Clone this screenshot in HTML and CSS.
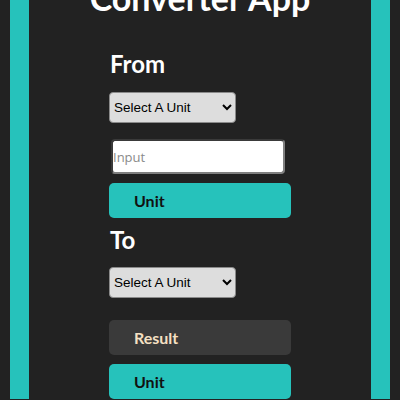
FILE: index.html
```html
<!DOCTYPE html>
<html>
<head>
<meta charset="utf-8">
<link rel="stylesheet" href="styles.css">
</head>
<body>
<div class="frame">
  <h1 class="title">Converter App</h1>
  <div class="panel">
    <h2 class="label label-from">From</h2>
    <select class="unit-select select-from"><option>Select A Unit</option></select>
    <input class="amount" type="text" placeholder="Input">
    <button class="btn btn-unit">Unit</button>
    <h2 class="label label-to">To</h2>
    <select class="unit-select select-to"><option>Select A Unit</option></select>
    <div class="btn result">Result</div>
    <button class="btn btn-unit">Unit</button>
  </div>
</div>
</body>
</html>
```
FILE: styles.css
```css
html, body {
  margin: 0;
  padding: 0;
  background: #222222;
  height: 400px;
  overflow: hidden;
}
.frame {
  margin: 0 10px;
  border-left: 19px solid #26c2bb;
  border-right: 19px solid #26c2bb;
  background: #222222;
  min-height: 400px;
  font-family: Lato, "Liberation Sans", sans-serif;
}
.title {
  margin: -22px 0 0 0;
  text-align: center;
  color: #ffffff;
  font-size: 34px;
  font-weight: 700;
  line-height: 40px;
}
.panel {
  width: 182px;
  margin: 0 auto;
  display: flex;
  flex-direction: column;
  align-items: flex-start;
}
.label {
  color: #ffffff;
  font-size: 24px;
  font-weight: 700;
  line-height: 28px;
  margin: 0 0 0 1px;
}
.label-from { margin-top: 32px; }
.label-to { margin-top: 8px; }
.unit-select {
  box-sizing: border-box;
  width: 127px;
  height: 31px;
  font-family: "Liberation Sans", Arial, sans-serif;
  font-size: 13.5px;
  color: #000;
  background: #dddddd;
  border: 1px solid #8a8a8a;
  border-radius: 4px;
  padding: 0;
}
.select-from { margin-top: 14px; }
.select-to { margin-top: 13px; }
.amount {
  box-sizing: border-box;
  width: 174px;
  height: 35px;
  margin: 16px 0 0 2px;
  border: 2px solid;
  border-color: #3a3a3a #808080 #808080 #3a3a3a;
  border-radius: 4px;
  background: #fff;
  font-family: "Open Sans", sans-serif;
  font-size: 13px;
  padding: 0;
}
.amount::placeholder { color: #8a8a8a; }
.btn {
  box-sizing: border-box;
  width: 182px;
  height: 35px;
  border: none;
  border-radius: 5px;
  padding: 0 0 0 25px;
  text-align: left;
  font-family: Lato, "Liberation Sans", sans-serif;
  font-size: 16px;
  font-weight: 700;
  line-height: 35px;
}
.btn-unit {
  margin-top: 9px;
  background: #26c2bb;
  color: #111;
}
.result {
  margin-top: 22px;
  background: #3a3a3a;
  color: #f5e0c3;
}
```
